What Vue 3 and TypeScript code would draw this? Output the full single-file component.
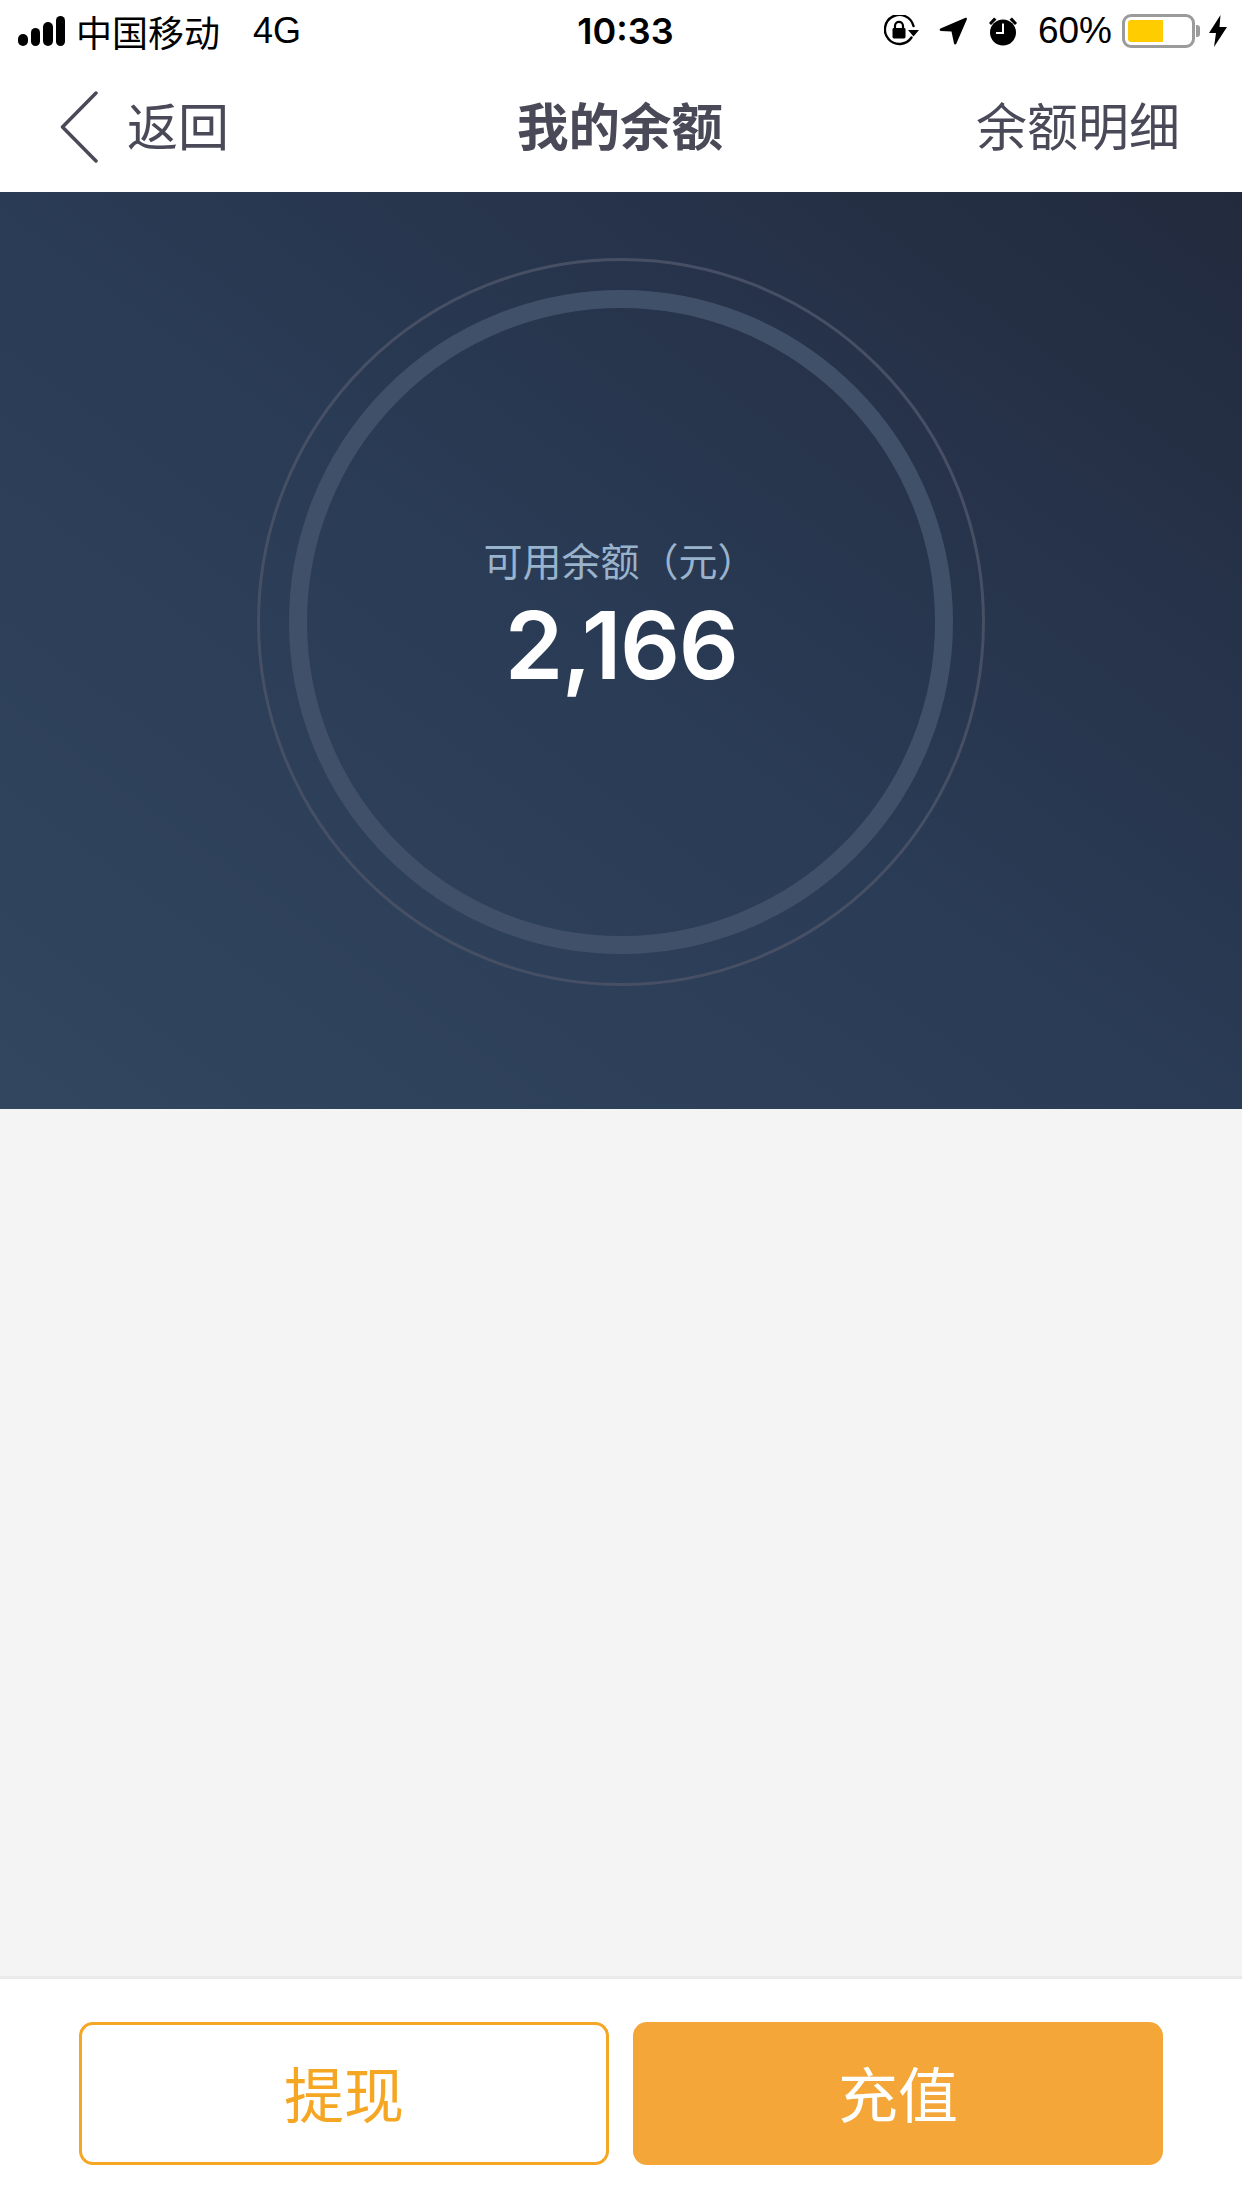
<script setup lang="ts">
const signalBars: number[] = [12, 18, 24, 30]
</script>

<template>
  <div class="page">
    <header class="status">
      <div class="status-left">
        <div class="signal">
          <span v-for="h in signalBars" :key="h" class="bar" :style="{ height: h + 'px' }"></span>
        </div>
        <span class="carrier">中国移动</span>
        <span class="net">4G</span>
      </div>
      <div class="time">10:33</div>
      <div class="status-right">
        <svg class="ic-lock" width="35" height="32" viewBox="0 0 35 32">
          <path d="M27.5 22.5A14.500 14.500 0 1 1 29.500 11" fill="none" stroke="#000" stroke-width="2.4" stroke-linecap="round" />
          <path d="M24 15h11l-5.500 6.500z" fill="#000" />
          <rect x="8.500" y="13" width="13" height="10.500" rx="1.400" fill="#000" />
          <path d="M11 13.500v-2.600a4 4 0 0 1 8 0v2.600" fill="none" stroke="#000" stroke-width="2.200" />
        </svg>
        <svg class="ic-nav" width="28" height="28" viewBox="0 0 28 28">
          <path d="M26.500 .8 1.500 11.500c-1.300.6-1 2.300.4 2.400l10.600.7 2.500 12c.3 1.200 1.800 1.300 2.300.2L27.900 2.300c.3-1-.5-1.900-1.400-1.500z" fill="#000" />
        </svg>
        <svg class="ic-alarm" width="30" height="30" viewBox="0 0 30 30">
          <circle cx="15" cy="16.500" r="13" fill="#000" />
          <path d="M1 7 6 1.500 8.500 3.500 3 9zM29 7 24 1.500 21.500 3.500 27 9z" fill="#000" />
          <path d="M15 7.500v9.500H8" fill="none" stroke="#fff" stroke-width="2" />
        </svg>
        <span class="pct">60%</span>
        <div class="battery">
          <div class="battery-body"><div class="battery-fill"></div></div>
          <div class="battery-nub"></div>
        </div>
        <svg class="ic-bolt" width="18" height="32" viewBox="0 0 18 32">
          <path d="M11.500 0 0 18h7L5 32 18 12h-7.500z" fill="#000" />
        </svg>
      </div>
    </header>

    <nav class="nav">
      <div class="nav-back">
        <svg class="chevron" width="38" height="72" viewBox="0 0 38 72">
          <path d="M36 2 2.500 36 36 70" fill="none" stroke="#4a4958" stroke-width="3.500" stroke-linecap="round" stroke-linejoin="round" />
        </svg>
        <span>返回</span>
      </div>
      <div class="nav-title">我的余额</div>
      <div class="nav-link">余额明细</div>
    </nav>

    <section class="hero">
      <div class="ring-outer">
        <div class="ring-inner">
          <div class="label">可用余额（元）</div>
          <div class="amount">2,166</div>
        </div>
      </div>
    </section>

    <main class="empty"></main>

    <footer class="footer">
      <button class="btn btn-outline">提现</button>
      <button class="btn btn-solid">充值</button>
    </footer>
  </div>
</template>

<style>
html, body { margin: 0; padding: 0; background: #fff; }
</style>

<style scoped>
.page {
  width: 1242px;
  height: 2208px;
  display: flex;
  flex-direction: column;
  font-family: "Noto Sans CJK SC", "Liberation Sans", sans-serif;
  overflow: hidden;
}
.status {
  height: 60px;
  display: grid;
  grid-template-columns: 1fr auto 1fr;
  align-items: center;
  padding: 1px 15px 0 18px;
  color: #000;
  box-sizing: border-box;
}
.status-left { display: flex; align-items: center; }
.signal { display: flex; align-items: flex-end; gap: 3px; width: 58px; }
.bar { width: 9.500px; background: #000; border-radius: 5px; }
.carrier { font-size: 36px; line-height: 44px; font-weight: 400; }
.net { font-family: "Liberation Sans", sans-serif; font-size: 36px; margin-left: 33px; }
.time { font-family: "Inter", sans-serif; font-weight: 600; font-size: 36px; margin-left: 6px; }
.status-right { display: flex; align-items: center; justify-content: flex-end; }
.ic-lock { margin-right: 20px; }
.ic-nav { margin-right: 21px; }
.ic-alarm { margin-right: 20px; }
.pct { font-family: "Liberation Sans", sans-serif; font-size: 37px; margin-right: 10px; }
.battery { display: flex; align-items: center; margin-right: 9px; }
.battery-body {
  width: 73px;
  height: 34px;
  box-sizing: border-box;
  border: 3px solid #9b9b9b;
  border-radius: 9px;
  padding: 3px;
}
.battery-fill { width: 35px; height: 22px; background: #ffcc00; border-radius: 3px 0 0 3px; }
.battery-nub { width: 4px; height: 12px; background: #9b9b9b; border-radius: 0 3px 3px 0; margin-left: 1px; }

.nav {
  height: 132px;
  display: grid;
  grid-template-columns: 1fr auto 1fr;
  align-items: center;
  padding: 0 62px 4px 60px;
  color: #4a4958;
  font-size: 51px;
  line-height: 72px;
  box-sizing: border-box;
}
.nav-back { display: flex; align-items: center; gap: 29px; }
.chevron { margin-top: 6px; }
.nav-title { font-weight: 700; font-size: 51.500px; }
.nav-link { text-align: right; }

.hero {
  height: 917px;
  flex: none;
  box-sizing: border-box;
  padding-bottom: 57px;
  display: flex;
  align-items: center;
  justify-content: center;
  background: linear-gradient(to top right, #32465f 0%, #2a3b55 50%, #222a3d 100%);
}
.ring-outer {
  width: 728px;
  height: 728px;
  box-sizing: border-box;
  border: 3px solid #464f64;
  border-radius: 50%;
  display: flex;
  align-items: center;
  justify-content: center;
}
.ring-inner {
  width: 664px;
  height: 664px;
  box-sizing: border-box;
  border: 18px solid #415069;
  border-radius: 50%;
  display: flex;
  flex-direction: column;
  align-items: center;
  padding-top: 225px;
}
.label {
  color: #9ab3cc;
  font-size: 39px;
  line-height: 52px;
  font-weight: 400;
  margin-left: -2px;
}
.amount {
  color: #fff;
  font-family: "Inter", sans-serif;
  font-size: 94px;
  line-height: 110px;
  font-weight: 600;
  margin-top: 5px;
  letter-spacing: -1.500px;
}
.empty { flex: 1; background: #f4f4f4; }
.footer {
  height: 232px;
  flex: none;
  box-sizing: border-box;
  border-top: 3px solid #eaeaea;
  background: #fff;
  display: flex;
  gap: 24px;
  padding: 43px 79px 0;
}
.btn {
  width: 530px;
  height: 143px;
  box-sizing: border-box;
  border-radius: 14px;
  font-family: inherit;
  font-size: 60px;
  font-weight: 400;
  padding: 0 0 4px;
}
.btn-outline { background: #fff; border: 3px solid #f5a623; color: #f5a623; }
.btn-solid { background: #f4a738; border: 0; color: #fff; }
</style>
